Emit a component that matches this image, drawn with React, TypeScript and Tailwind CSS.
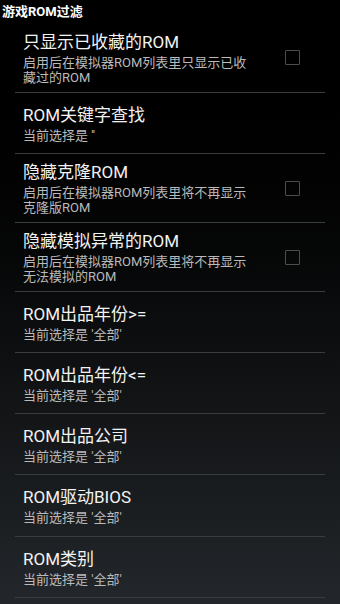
import React from "react";

type Item = { title: string; sub: string[]; check?: boolean; h: string };

const items: Item[] = [
  { title: "只显示已收藏的ROM", sub: ["启用后在模拟器ROM列表里只显示已收", "藏过的ROM"], check: true, h: "h-[69px]" },
  { title: "ROM关键字查找", sub: ["当前选择是 ''"], h: "h-[60px]" },
  { title: "隐藏克隆ROM", sub: ["启用后在模拟器ROM列表里将不再显示", "克隆版ROM"], check: true, h: "h-[68px]" },
  { title: "隐藏模拟异常的ROM", sub: ["启用后在模拟器ROM列表里将不再显示", "无法模拟的ROM"], check: true, h: "h-[68px]" },
  { title: "ROM出品年份>=", sub: ["当前选择是 '全部'"], h: "h-[60px]" },
  { title: "ROM出品年份<=", sub: ["当前选择是 '全部'"], h: "h-[60px]" },
  { title: "ROM出品公司", sub: ["当前选择是 '全部'"], h: "h-[60px]" },
  { title: "ROM驱动BIOS", sub: ["当前选择是 '全部'"], h: "h-[61px]" },
  { title: "ROM类别", sub: ["当前选择是 '全部'"], h: "h-[60px]" },
];

export default function App() {
  return (
    <div
      className="w-[340px] h-[604px] overflow-hidden bg-linear-to-b from-[#000000] via-[#0a0b0c] to-[#23272b] text-white"
      style={{ fontFamily: "Roboto, 'Noto Sans CJK SC', sans-serif" }}
    >
      <div className="h-[23px] flex items-center pl-[2px] text-[13px] font-bold leading-none text-white">
        游戏ROM过滤
      </div>
      {items.map((it, i) => (
        <div key={i}>
          <div className={`${it.h} flex items-center pl-[23px] pr-[40px]`}>
            <div className="flex-1 flex flex-col">
              <div className="text-[17px] leading-[22px] text-[#f2f2f2]">{it.title}</div>
              <div className="mt-[2px] text-[13px] leading-[15px] text-[#bababa]">
                {it.sub.map((s, j) => (
                  <div key={j}>{s}</div>
                ))}
              </div>
            </div>
            {it.check && (
              <div className="w-[15px] h-[15px] border-[1.5px] border-[#4d4d4d] rounded-[1px]" />
            )}
          </div>
          <div className="mx-[15px] h-px bg-[#3a3d40]" />
        </div>
      ))}
    </div>
  );
}
